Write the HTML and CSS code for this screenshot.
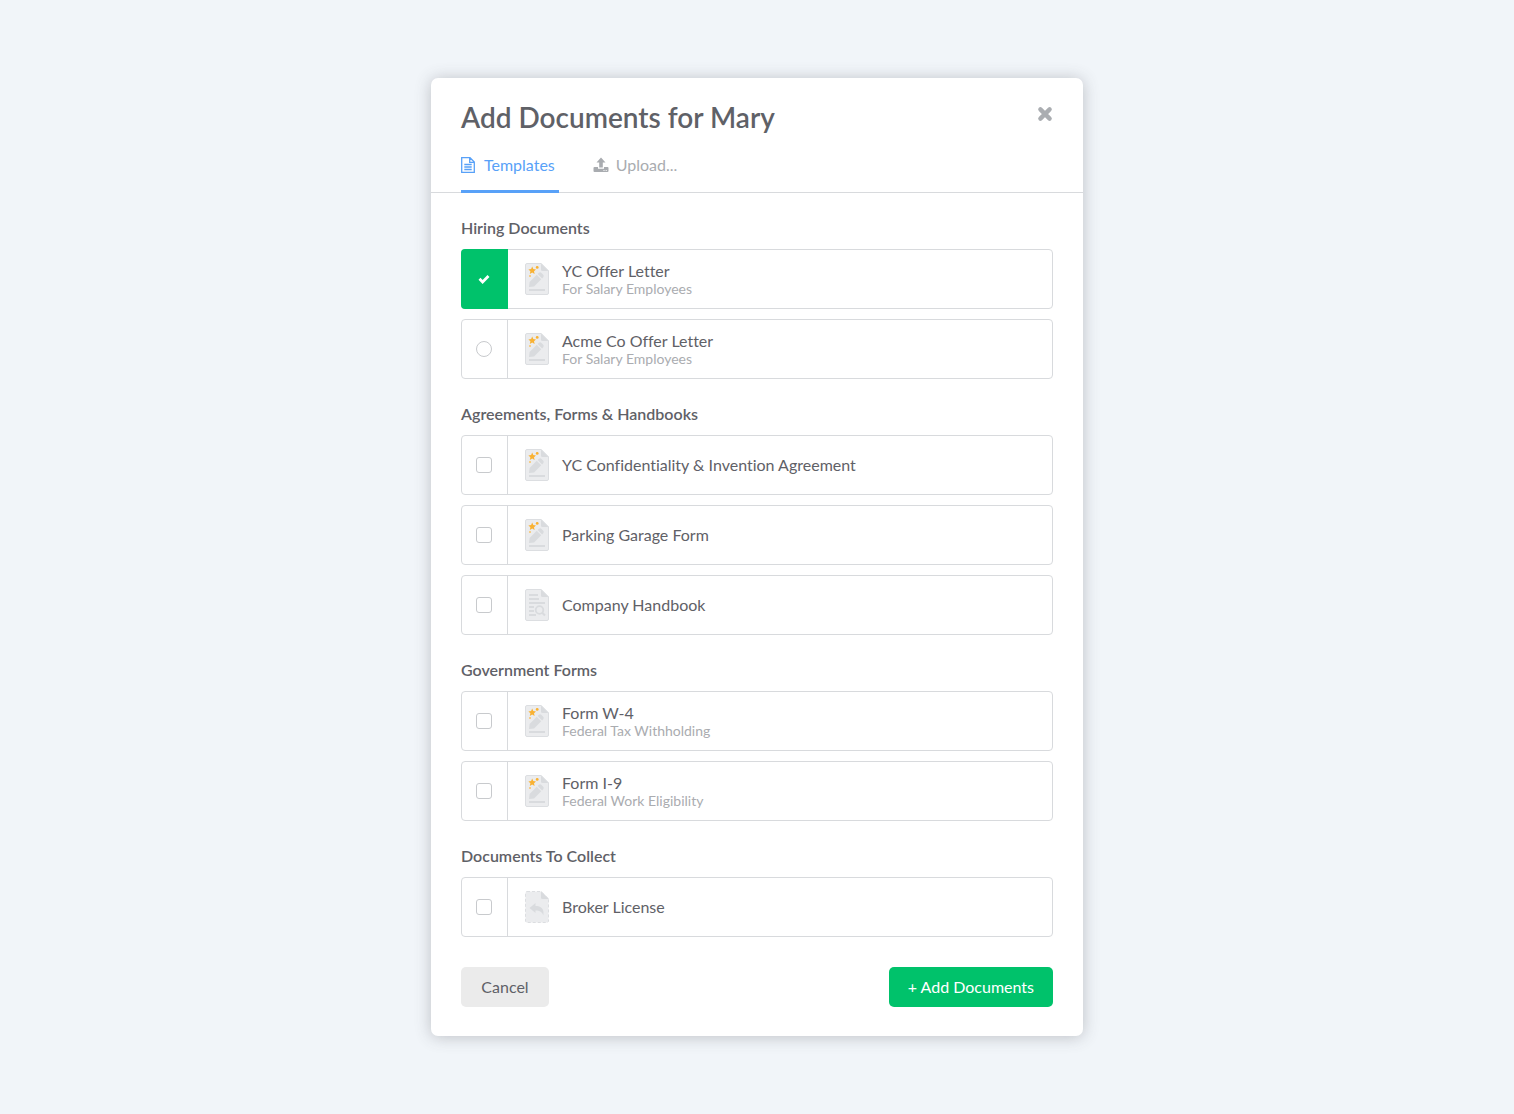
FILE: index.html
```html
<!DOCTYPE html>
<html lang="en">
<head>
<meta charset="utf-8">
<meta name="viewport" content="width=device-width, initial-scale=1">
<title>Add Documents for Mary</title>
<link rel="stylesheet" href="styles.css">
</head>
<body>
<svg class="sprite" aria-hidden="true">
  <symbol id="sheet" viewBox="0 0 24 32">
    <path d="M2 .5H16L23.5 8V30a1.5 1.5 0 0 1-1.5 1.5H2A1.5 1.5 0 0 1 .5 30V2A1.5 1.5 0 0 1 2 .5Z" fill="#ebecee"/>
    <path d="M16 0 24 8H17.5A1.5 1.5 0 0 1 16 6.5Z" fill="#d9dbde"/>
  </symbol>
  <symbol id="doc-sign" viewBox="0 0 24 32">
    <use href="#sheet"/>
    <path d="M2 .5H16L23.5 8V30a1.5 1.5 0 0 1-1.5 1.5H2A1.5 1.5 0 0 1 .5 30V2A1.5 1.5 0 0 1 2 .5Z" fill="none" stroke="#dcdee1"/>
    <path d="M4 24 4.6 18.900 11.700 11.800 16.200 16.300 9.100 23.400ZM12.600 10.900 13.800 9.700Q15.200 8.600 16.500 9.900L18.100 11.500Q19.400 12.800 18.300 14.200L17.100 15.400Z" fill="#d9dbde"/>
    <path d="M4 27H20" stroke="#d9dbde" stroke-width="2"/>
    <path d="M7.2 3.600 8.300 6.100 11 6.400 9 8.200 9.600 10.900 7.200 9.500 4.800 10.900 5.400 8.200 3.400 6.400 6.100 6.100Z" fill="#f9b233"/>
    <circle cx="12.200" cy="4.400" r="1.400" fill="#f9b233"/>
    <circle cx="5" cy="13" r="1" fill="#f9c468"/>
  </symbol>
  <symbol id="doc-read" viewBox="0 0 24 32">
    <use href="#sheet"/>
    <path d="M2 .5H16L23.5 8V30a1.5 1.5 0 0 1-1.5 1.5H2A1.5 1.5 0 0 1 .5 30V2A1.5 1.5 0 0 1 2 .5Z" fill="none" stroke="#dcdee1"/>
    <path d="M4 6H13M4 10H14M4 14H20M4 18H9M4 22H9M4 26H11" stroke="#d9dbde" stroke-width="1.800"/>
    <circle cx="14.500" cy="21" r="3.800" fill="none" stroke="#d9dbde" stroke-width="1.800"/>
    <path d="M17.200 23.700 20 26.500" stroke="#d9dbde" stroke-width="2"/>
  </symbol>
  <symbol id="doc-collect" viewBox="0 0 24 32">
    <use href="#sheet"/>
    <path d="M2 .5H16L23.5 8V30a1.5 1.5 0 0 1-1.5 1.5H2A1.5 1.5 0 0 1 .5 30V2A1.5 1.5 0 0 1 2 .5Z" fill="none" stroke="#dcdee1" stroke-dasharray="3 2"/>
    <path d="M4.500 17 10.500 12V15C16 15 19.500 17.500 18.300 24.500 17.300 21 15 19.500 10.500 19.500V22Z" fill="#d9dbde"/>
  </symbol>
  <symbol id="check" viewBox="0 0 12 10">
    <path d="M1.500 4.800 4.600 7.900 10.500 2" fill="none" stroke="currentColor" stroke-width="2.800"/>
  </symbol>
</svg>

<main class="modal" role="dialog" aria-labelledby="modal-title">
  <header class="modal-header">
    <div class="title-row">
      <h1 class="title" id="modal-title">Add Documents for Mary</h1>
      <button class="close" type="button" aria-label="Close">
        <svg class="close-icon" viewBox="0 0 16 16"><path d="M3.400 3.400 12.600 12.600M12.600 3.400 3.400 12.600" stroke="currentColor" stroke-width="4.400" stroke-linecap="round"/></svg>
      </button>
    </div>
    <nav class="tabs">
      <a class="tab tab-active" href="#templates" aria-current="page">
        <svg class="tab-icon" viewBox="0 0 16 18"><path d="M.7 1.700H9L13.300 6V16.300H.7ZM8.700 1.700V6.300H13.300M3.300 8.500H10.700M3.300 11H10.700M3.300 13.500H10.700" fill="none" stroke="currentColor" stroke-width="1.300"/></svg>
        Templates
      </a>
      <a class="tab" href="#upload">
        <svg class="tab-icon" viewBox="0 0 16 18"><path d="M8 1.500 12.500 6.500H9.800V11.500H6.200V6.500H3.500Z" fill="currentColor"/><path d="M1.500 11H5V12.800H11V11H14.500Q15.500 11 15.500 12V15Q15.500 16 14.500 16H1.500Q.5 16 .5 15V12Q.5 11 1.500 11ZM10.500 14V15H11.500V14ZM12.700 14V15H13.700V14Z" fill="currentColor" fill-rule="evenodd"/></svg>
        Upload...
      </a>
    </nav>
  </header>

  <form class="modal-body">
    <section class="group">
      <h2 class="group-title">Hiring Documents</h2>
      <label class="item">
        <span class="pick"><input class="input" type="radio" name="offer" checked><svg class="tick"><use href="#check"/></svg></span>
        <svg class="doc"><use href="#doc-sign"/></svg>
        <span class="text"><span class="name">YC Offer Letter</span><span class="note">For Salary Employees</span></span>
      </label>
      <label class="item">
        <span class="pick"><input class="input" type="radio" name="offer"><svg class="tick"><use href="#check"/></svg></span>
        <svg class="doc"><use href="#doc-sign"/></svg>
        <span class="text"><span class="name">Acme Co Offer Letter</span><span class="note">For Salary Employees</span></span>
      </label>
    </section>

    <section class="group">
      <h2 class="group-title">Agreements, Forms &amp; Handbooks</h2>
      <label class="item">
        <span class="pick"><input class="input" type="checkbox"><svg class="tick"><use href="#check"/></svg></span>
        <svg class="doc"><use href="#doc-sign"/></svg>
        <span class="text"><span class="name">YC Confidentiality &amp; Invention Agreement</span></span>
      </label>
      <label class="item">
        <span class="pick"><input class="input" type="checkbox"><svg class="tick"><use href="#check"/></svg></span>
        <svg class="doc"><use href="#doc-sign"/></svg>
        <span class="text"><span class="name">Parking Garage Form</span></span>
      </label>
      <label class="item">
        <span class="pick"><input class="input" type="checkbox"><svg class="tick"><use href="#check"/></svg></span>
        <svg class="doc"><use href="#doc-read"/></svg>
        <span class="text"><span class="name">Company Handbook</span></span>
      </label>
    </section>

    <section class="group">
      <h2 class="group-title">Government Forms</h2>
      <label class="item">
        <span class="pick"><input class="input" type="checkbox"><svg class="tick"><use href="#check"/></svg></span>
        <svg class="doc"><use href="#doc-sign"/></svg>
        <span class="text"><span class="name">Form W-4</span><span class="note">Federal Tax Withholding</span></span>
      </label>
      <label class="item">
        <span class="pick"><input class="input" type="checkbox"><svg class="tick"><use href="#check"/></svg></span>
        <svg class="doc"><use href="#doc-sign"/></svg>
        <span class="text"><span class="name">Form I-9</span><span class="note">Federal Work Eligibility</span></span>
      </label>
    </section>

    <section class="group">
      <h2 class="group-title">Documents To Collect</h2>
      <label class="item">
        <span class="pick"><input class="input" type="checkbox"><svg class="tick"><use href="#check"/></svg></span>
        <svg class="doc"><use href="#doc-collect"/></svg>
        <span class="text"><span class="name">Broker License</span></span>
      </label>
    </section>

    <footer class="actions">
      <button class="button button-plain" type="button">Cancel</button>
      <button class="button button-primary" type="submit">+ Add Documents</button>
    </footer>
  </form>
</main>
</body>
</html>
```
FILE: styles.css
```css
*,
*::before,
*::after {
  box-sizing: border-box;
}

body {
  margin: 0;
  padding: 78px 16px;
  background: #f1f5f9;
  color: #5f6167;
  font: 16px/20px Lato, "Open Sans", sans-serif;
  font-variant-ligatures: none;
}

.sprite {
  display: none;
}

.modal {
  max-width: 652px;
  margin: 0 auto;
  background: #fff;
  border-radius: 7px;
  box-shadow: 0 1px 16px rgba(70, 70, 80, 0.3);
}

.modal-header {
  padding: 19px 30px 0;
  border-bottom: 1px solid #d8dadd;
}

.title-row {
  display: flex;
  justify-content: space-between;
  align-items: center;
}

.title {
  margin: 0;
  font-size: 28px;
  line-height: 40px;
  font-weight: 600;
}

.close {
  display: flex;
  margin-bottom: 6px;
  padding: 0;
  border: 0;
  background: none;
  color: #aaadb1;
}

.close-icon {
  width: 16px;
  height: 16px;
}

.tabs {
  display: flex;
  gap: 34px;
  margin-bottom: -1px;
}

.tab {
  display: flex;
  align-items: center;
  gap: 7px;
  height: 56px;
  padding: 2px 3px 0 0;
  border-bottom: 3px solid transparent;
  color: #a9acb0;
  text-decoration: none;
}

.tab-active {
  padding-right: 4px;
  border-color: #58a1f8;
  color: #58a1f8;
}

.tab-icon {
  width: 16px;
  height: 18px;
}

.modal-body {
  display: grid;
  gap: 25px;
  padding: 25px 30px 29px;
}

.group {
  display: grid;
  gap: 10px;
}

.group-title {
  margin: 0 0 1px;
  font-size: 16px;
  line-height: 20px;
  font-weight: 600;
}

.item {
  display: flex;
  align-items: center;
  height: 60px;
  border: 1px solid #d8dadd;
  border-radius: 4px;
}

.pick {
  display: grid;
  place-items: center;
  align-self: stretch;
  width: 46px;
  padding-right: 1px;
  border-right: 1px solid #d8dadd;
}

.input,
.tick {
  grid-area: 1 / 1;
}

.input {
  appearance: none;
  width: 16px;
  height: 16px;
  margin: 0;
  border: 1px solid #c8cacd;
  border-radius: 3px;
  background: #fff;
}

.input[type="radio"] {
  border-radius: 50%;
}

.tick {
  display: none;
  width: 12px;
  height: 10px;
  color: #fff;
}

.pick:has(:checked) {
  width: 47px;
  margin: -1px 0 -1px -1px;
  border: 0;
  border-radius: 4px 0 0 4px;
  background: #00c26b;
}

.input:checked {
  opacity: 0;
}

.input:checked + .tick {
  display: block;
}

.doc {
  width: 24px;
  height: 32px;
  margin: 0 13px 0 17px;
}

.text {
  display: grid;
}

.name {
  line-height: 20px;
}

.note {
  color: #aaacb0;
  font-size: 14px;
  line-height: 16px;
}

.actions {
  display: flex;
  justify-content: space-between;
  margin-top: 5px;
}

.button {
  min-width: 88px;
  height: 40px;
  padding: 0 19px;
  border: 0;
  border-radius: 5px;
  font: inherit;
}

.button-plain {
  background: #ebebeb;
  color: #5f6167;
}

.button-primary {
  background: #00c26b;
  color: #fff;
}
```
